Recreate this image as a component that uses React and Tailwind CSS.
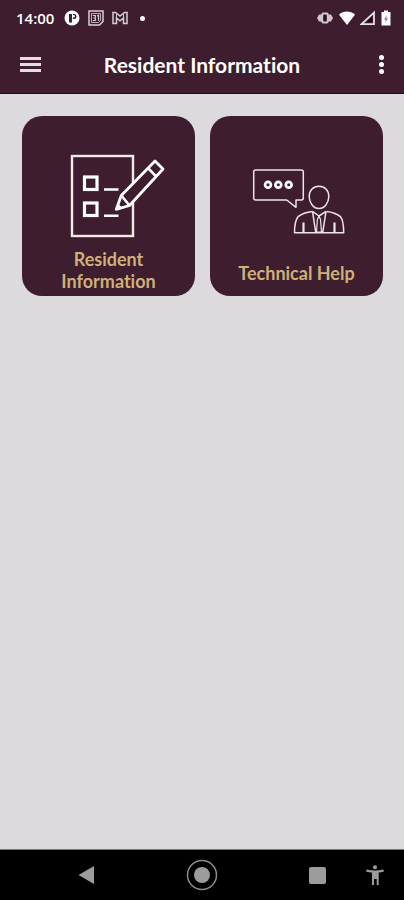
const SANS = "font-['Lato','Open_Sans',sans-serif] [font-variant-ligatures:none]";

function StatusBar() {
  return (
    <div className="flex h-9 items-center justify-between pl-4 pr-3 text-white">
      <div className="flex items-center gap-2">
        <span className="w-10 font-['Open_Sans',sans-serif] text-[15px] leading-5 font-semibold">14:00</span>
        <svg className="size-4" viewBox="0 0 16 16" aria-hidden="true">
          <circle cx="8" cy="8" r="7.5" fill="#fff" />
          <path d="M5 12.500V4h3v8.500z" fill="#3d1d2e" />
          <path d="M9 4h1.500q2 .3 2 2.500t-2 2.500H9z" fill="#3d1d2e" />
          <circle cx="9.600" cy="6.300" r="1.200" fill="#fff" />
        </svg>
        <svg className="size-4" viewBox="0 0 16 16" fill="none" stroke="#d9d0d5" aria-hidden="true">
          <path d="M1 1h14v10.500L11.500 15H1z" strokeWidth="1.500" />
          <path d="M3.500 3.500h9v7l-2 2h-7z" strokeWidth="0.800" />
          <path d="M4.800 5.500h2.500v5H4.800M5.300 8h2M9 6l1.500-.7v5.500" strokeWidth="1.200" />
        </svg>
        <svg className="size-4" viewBox="0 0 16 16" fill="none" stroke="#d9d0d5" strokeWidth="1.500" aria-hidden="true">
          <path d="M1 2.500h2.500L8 6l4.500-3.500H15v11h-3.500V8L8 10.800 4.500 8v5.500H1z" />
          <path d="M4.500 3.500V8M11.500 3.500V8" strokeWidth="0.900" />
        </svg>
        <span className="ml-1 size-[5px] rounded-full bg-white" />
      </div>
      <div className="flex items-center gap-1">
        <svg className="h-4 w-[18px]" viewBox="0 0 18 16" aria-hidden="true">
          <path d="M1 8l2-3.500h2L6.500 2.500h5L13 4.500h2L17 8l-2 3.500h-2l-1.500 2h-5l-1.500-2H3z" fill="#cfc5ca" />
          <rect x="7.200" y="4.500" width="3.600" height="7" rx="1" fill="#2a1220" />
        </svg>
        <svg className="h-4 w-[18px]" viewBox="0 0 18 16" aria-hidden="true">
          <path d="M1 4.800C5.500.4 12.500.4 17 4.800L9 15z" fill="#fff" />
        </svg>
        <svg className="h-4 w-4" viewBox="0 0 16 16" aria-hidden="true">
          <path d="M1.500 14.200L14 2.500v11.700z" fill="none" stroke="#e6dfe3" strokeWidth="1.800" />
          <path d="M6.500 12L12 7v5z" fill="#180a12" />
        </svg>
        <svg className="h-4 w-3" viewBox="0 0 12 16" aria-hidden="true">
          <path d="M4 .500h4V2h2.500v13.500h-9V2H4z" fill="#fff" />
          <path d="M6.700 5.500L4 9.500h1.700L5.300 12.500 8 8.500H6.300z" fill="#8a7681" />
        </svg>
      </div>
    </div>
  );
}

function ResidentIcon() {
  return (
    <svg className="h-[88px] w-24" viewBox="0 0 96 88" fill="none" stroke="#fff" aria-hidden="true">
      <rect x="3" y="4" width="61" height="80" strokeWidth="2.400" stroke="#f0e9e6" />
      <rect x="15.500" y="25" width="12.500" height="12.500" strokeWidth="3.200" />
      <rect x="15.500" y="51" width="12.500" height="12.500" strokeWidth="3.200" />
      <path d="M35 37.500h14.500M35 63.700h14.500" strokeWidth="2.600" />
      <path
        d="M47.300 57.300L52.300 43.500 86 9l8 8-33.500 36.500z"
        fill="#3d1d2e"
        strokeWidth="2.800"
        strokeLinejoin="round"
      />
      <path d="M52.300 43.500L60.500 53.500M79 16l8 8.300" strokeWidth="2.600" />
      <path d="M47.300 57.300l1.900-5 3.400 3.300z" fill="#fff" />
    </svg>
  );
}

function HelpIcon() {
  return (
    <svg className="h-[72px] w-24" viewBox="0 0 96 72" fill="none" stroke="#ece4e6" strokeWidth="1.500" strokeLinejoin="round" aria-hidden="true">
      <path d="M4.700 4h45.600q2 0 2 2v26q0 2-2 2H45v7.300L35.700 34h-31q-2 0-2-2V6q0-2 2-2z" />
      <g stroke="#fff" strokeWidth="2.700">
        <circle cx="17" cy="18.700" r="2.900" />
        <circle cx="27.300" cy="18.700" r="2.900" />
        <circle cx="37.700" cy="18.700" r="2.900" />
      </g>
      <path d="M68 20.300c6 0 10 4.500 9.800 10.500C77.600 37 73.500 42.600 68 42.600s-9.600-5.600-9.800-11.800C58 24.800 62 20.300 68 20.300z" />
      <path d="M61.500 45.400c-4 .4-11 2.400-14.500 5.300-2.500 3.300-3.500 9-3.500 16h49.200c0-7-.6-12.700-3.200-16-3.500-2.900-9.500-4.900-14-5.300" />
      <path d="M61.500 45.400l3.300 21.300M75 45.400l-3.300 21.300M61.500 45.400L68 50l7-4.600" />
      <path d="M68 50l-1.600 3.500L65.500 66h5l-1-12.500z" strokeWidth="1.200" />
      <path d="M52.500 56.500v10M83.500 56.500v10" strokeWidth="2.200" />
    </svg>
  );
}

function Card({ icon, children }) {
  return (
    <button
      type="button"
      className="flex h-[180px] flex-col items-center justify-end rounded-[20px] bg-[#3d1d2e] pb-1 text-lg leading-[22px] font-bold text-[#cdb07a]"
    >
      {icon}
      {children}
    </button>
  );
}

export default function App() {
  return (
    <div className={`flex min-h-screen flex-col bg-[#dddadd] ${SANS}`}>
      <header className="border-b border-[#2a0818] bg-[#3d1d2e]">
        <StatusBar />
        <div className="flex h-[57px] items-center justify-between px-5 text-white">
          <button type="button" aria-label="Open menu" className="flex w-[21px] flex-col gap-[3px]">
            <span className="h-[3px] bg-[#e6dee2]" />
            <span className="h-[3px] bg-[#e6dee2]" />
            <span className="h-[3px] bg-[#e6dee2]" />
          </button>
          <h1 className="text-[21px] leading-7 font-bold">Resident Information</h1>
          <button type="button" aria-label="More options" className="flex w-[21px] flex-col items-end gap-[2px]">
            <span className="size-[5px] rounded-full bg-white" />
            <span className="size-[5px] rounded-full bg-white" />
            <span className="size-[5px] rounded-full bg-white" />
          </button>
        </div>
      </header>

      <main className="grid flex-1 grid-cols-2 content-start gap-[15px] pt-[22px] pr-[21px] pl-[22px]">
        <Card icon={<span className="mb-2 pl-4"><ResidentIcon /></span>}>
          <span className="px-6">Resident Information</span>
        </Card>
        <Card icon={<span className="mb-6 pl-1"><HelpIcon /></span>}>
          <span className="pb-2">Technical Help</span>
        </Card>
      </main>

      <nav aria-label="System" className="grid h-[51px] grid-cols-7 place-items-center border-t border-[#777] bg-black">
        <button type="button" aria-label="Back" className="col-start-2">
          <svg className="size-5" viewBox="0 0 20 20" aria-hidden="true">
            <path d="M1.500 10L17 1v18z" fill="#9c9c9c" />
          </svg>
        </button>
        <button type="button" aria-label="Home" className="col-start-4">
          <svg className="size-8" viewBox="0 0 32 32" aria-hidden="true">
            <circle cx="16" cy="16" r="14.500" fill="none" stroke="#8c8c8c" strokeWidth="1.500" />
            <circle cx="16" cy="16" r="8" fill="#9c9c9c" />
          </svg>
        </button>
        <button type="button" aria-label="Recent apps" className="col-start-6">
          <span className="block size-[17px] rounded-[2px] bg-[#9c9c9c]" />
        </button>
        <button type="button" aria-label="Accessibility" className="col-start-7">
          <svg className="size-5" viewBox="0 0 20 20" fill="#9c9c9c" aria-hidden="true">
            <circle cx="10" cy="2.300" r="2" />
            <path d="M1.500 4.500c5.500 1.300 11.500 1.300 17 0l.4 1.900c-1.600.5-3.400.9-5.200 1.100V20h-2v-6H9v6H7V7.500c-2-.2-4-.6-5.900-1.100z" />
          </svg>
        </button>
      </nav>
    </div>
  );
}
